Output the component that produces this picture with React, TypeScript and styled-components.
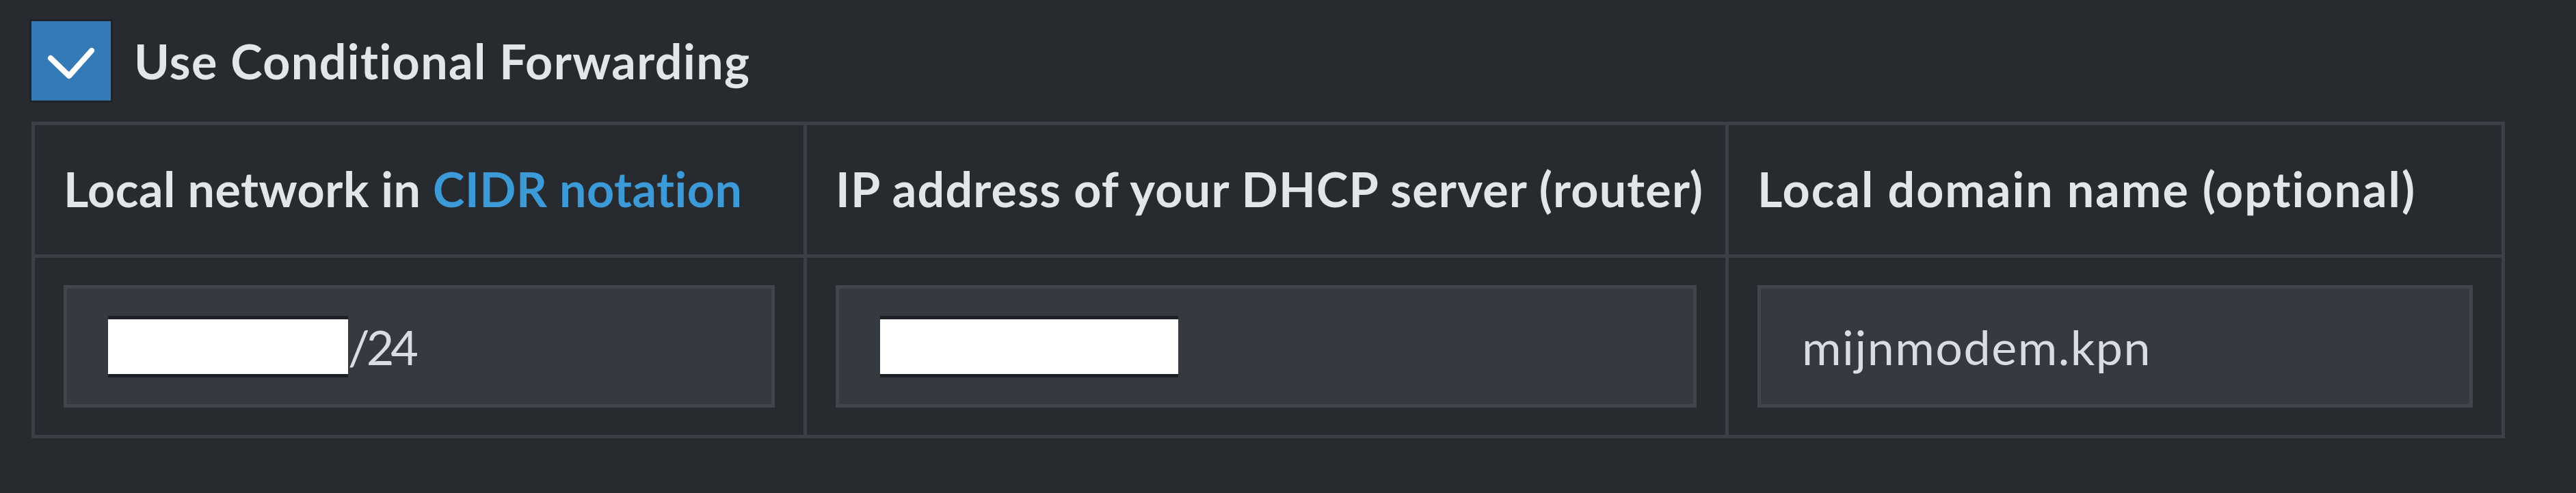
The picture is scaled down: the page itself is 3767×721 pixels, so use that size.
import React from "react";
import styled, { createGlobalStyle } from "styled-components";

const GlobalStyle = createGlobalStyle`
  html, body {
    margin: 0;
    background: #272b30;
  }
  body {
    font-family: Lato, "Noto Sans", sans-serif;
    color: #e2e6ea;
  }
`;

const Page = styled.div`
  padding: 31px 0 0 46px;
`;

const CheckRow = styled.label`
  display: flex;
  align-items: center;
  gap: 34px;
  height: 116px;
`;

const CheckBox = styled.span`
  width: 116px;
  height: 116px;
  flex: none;
  background: #337ab7;
  box-shadow: 0 0 0 3px #1f2226;
  display: flex;
  align-items: center;
  justify-content: center;
`;

const CheckLabel = styled.span`
  font-size: 70px;
  font-weight: 700;
  line-height: 84px;
  letter-spacing: 1.4px;
`;

const Table = styled.div`
  margin-top: 31px;
  width: 3617px;
  display: grid;
  grid-template-columns: 1124px 1343px 1130px;
  gap: 5px;
  padding: 5px;
  box-sizing: border-box;
  background: #3b4046;
`;

const HeaderCell = styled.div<{ $spacing: number }>`
  background: #272b30;
  padding: 40px 42px 43px;
  font-size: 70px;
  font-weight: 700;
  line-height: 106px;
  letter-spacing: ${(p) => p.$spacing}px;
  white-space: nowrap;
`;

const Link = styled.a`
  color: #3c9ad9;
  text-decoration: none;
`;

const Cell = styled.div`
  background: #272b30;
  padding: 40px 42px;
`;

const Input = styled.div`
  height: 179px;
  box-sizing: border-box;
  border: 5px solid #41464d;
  background: #343a40;
  padding: 0 60px;
  display: flex;
  align-items: center;
  font-size: 70px;
  line-height: 84px;
  letter-spacing: 1.5px;
  color: #d9dde1;
  white-space: nowrap;
`;

const Suffix = styled.span`
  letter-spacing: -5px;
`;

const Redacted = styled.span<{ $w: number }>`
  display: inline-block;
  width: ${(p) => p.$w}px;
  height: 80px;
  background: #ffffff;
  border-top: 5px solid #1c1f23;
  border-bottom: 5px solid #1c1f23;
`;

const Check = () => (
  <svg width="116" height="116" viewBox="0 0 116 116">
    <polyline
      points="28,54 55,80 88,43"
      fill="none"
      stroke="#ffffff"
      strokeWidth="8"
      strokeLinecap="round"
      strokeLinejoin="round"
    />
  </svg>
);

export default function App() {
  return (
    <Page>
      <GlobalStyle />
      <CheckRow>
        <CheckBox>
          <Check />
        </CheckBox>
        <CheckLabel>Use Conditional Forwarding</CheckLabel>
      </CheckRow>
      <Table>
        <HeaderCell $spacing={0.5}>
          Local network in <Link href="#">CIDR notation</Link>
        </HeaderCell>
        <HeaderCell $spacing={1.2}>IP address of your DHCP server (router)</HeaderCell>
        <HeaderCell $spacing={2}>Local domain name (optional)</HeaderCell>
        <Cell>
          <Input>
            <Redacted $w={351} />
            <Suffix>/24</Suffix>
          </Input>
        </Cell>
        <Cell>
          <Input>
            <Redacted $w={436} />
          </Input>
        </Cell>
        <Cell>
          <Input>mijnmodem.kpn</Input>
        </Cell>
      </Table>
    </Page>
  );
}
